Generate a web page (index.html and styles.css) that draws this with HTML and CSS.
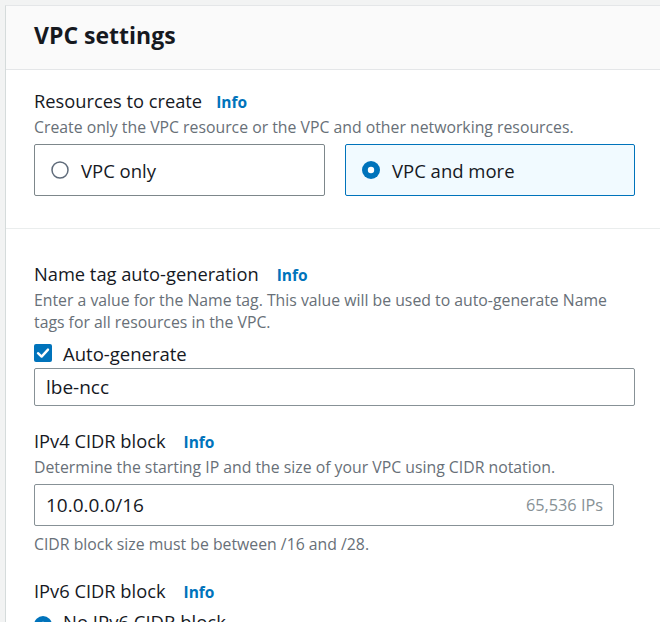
FILE: index.html
```html
<!DOCTYPE html>
<html>
<head>
<meta charset="utf-8">
<link rel="stylesheet" href="styles.css">
</head>
<body>
<div class="card">
  <div class="card-header"><h2>VPC settings</h2></div>
  <div class="section first">
    <div class="label">Resources to create<a class="info first-info">Info</a></div>
    <div class="desc">Create only the VPC resource or the VPC and other networking resources.</div>
    <div class="tiles">
      <div class="tile">
        <svg class="radio" viewBox="0 0 18 18"><circle cx="9" cy="9" r="8" fill="#fff" stroke="#5f6b7a" stroke-width="1.5"/></svg>
        <span>VPC only</span>
      </div>
      <div class="tile selected">
        <svg class="radio" viewBox="0 0 18 18"><circle cx="9" cy="9" r="9" fill="#0073bb"/><circle cx="9" cy="9" r="3.2" fill="#fff"/></svg>
        <span>VPC and more</span>
      </div>
    </div>
  </div>
  <div class="section second">
    <div class="label">Name tag auto-generation<a class="info">Info</a></div>
    <div class="desc two">Enter a value for the Name tag. This value will be used to auto-generate Name tags for all resources in the VPC.</div>
    <div class="check-row">
      <svg class="checkbox" viewBox="0 0 18 18"><rect x="0" y="0" width="18" height="18" rx="2" fill="#0073bb"/><path d="M4 9.2 L7.6 12.6 L14 5.6" fill="none" stroke="#fff" stroke-width="2.4" stroke-linecap="round" stroke-linejoin="round"/></svg>
      <span>Auto-generate</span>
    </div>
    <div class="input name-input">lbe-ncc</div>

    <div class="label field">IPv4 CIDR block<a class="info">Info</a></div>
    <div class="desc">Determine the starting IP and the size of your VPC using CIDR notation.</div>
    <div class="input cidr-input"><span>10.0.0.0/16</span><span class="suffix">65,536 IPs</span></div>
    <div class="desc hint">CIDR block size must be between /16 and /28.</div>

    <div class="label field v6">IPv6 CIDR block<a class="info">Info</a></div>
    <div class="radio-row">
      <svg class="radio" viewBox="0 0 18 18"><circle cx="9" cy="9" r="9" fill="#0073bb"/><circle cx="9" cy="9" r="3.2" fill="#fff"/></svg>
      <span>No IPv6 CIDR block</span>
    </div>
  </div>
</div>
</body>
</html>
```
FILE: styles.css
```css
html, body {
  margin: 0;
  padding: 0;
  background: #f2f3f3;
  font-family: "Open Sans", "Noto Sans", sans-serif;
  color: #16191f;
  overflow: hidden;
  height: 622px;
}
.card {
  margin: 5px 0 0 5px;
  background: #fff;
  border-top: 1px solid #e4e6e8;
  border-left: 1px solid #d5dbdb;
  width: 700px;
  height: 700px;
}
.card-header {
  background: #fafafa;
  border-bottom: 1px solid #e4e6e8;
  display: flex;
  align-items: center;
  padding-left: 28px;
  box-sizing: border-box;
  height: 64px;
  padding-bottom: 5px;
}
.card-header h2 {
  margin: 0;
  font-size: 23px;
  font-weight: 700;
}
.section {
  padding-left: 28px;
  width: 600px;
}
.section.first {
  padding-top: 19px;
  padding-bottom: 32px;
  border-bottom: 1px solid #eaeded;
  width: 626px;
}
.section.second {
  padding-top: 33px;
}
.label {
  font-size: 18.3px;
  line-height: 24px;
  height: 24px;
  white-space: nowrap;
}
.info {
  color: #0073bb;
  font-weight: 700;
  font-size: 15.5px;
  margin-left: 18px;
}
.info.first-info { margin-left: 14px; }
.desc {
  font-size: 15.8px;
  line-height: 22px;
  color: #687078;
  margin-top: 3px;
}
.tiles {
  display: grid;
  grid-template-columns: 291px 290px;
  gap: 20px;
  margin-top: 6px;
  width: 600px;
}
.tile {
  height: 50px;
  border: 1px solid #7d878b;
  border-radius: 2px;
  display: flex;
  align-items: center;
  padding-left: 16px;
  font-size: 18.5px;
}
.tile.selected {
  border-color: #0073bb;
  background: #f1faff;
}
.radio {
  width: 18px;
  height: 18px;
  margin-right: 12px;
  flex: none;
}
.check-row {
  display: flex;
  align-items: center;
  height: 22px;
  margin-top: 9px;
  font-size: 18.5px;
}
.checkbox {
  width: 18px;
  height: 18px;
  margin-right: 11px;
  flex: none;
}
.input {
  border: 1px solid #879196;
  border-radius: 2px;
  display: flex;
  align-items: center;
  justify-content: space-between;
  padding: 0 10px 0 11px;
  font-size: 19px;
  box-sizing: border-box;
}
.name-input {
  width: 601px;
  height: 38px;
  margin-top: 4px;
}
.cidr-input {
  width: 580px;
  height: 42px;
  margin-top: 6px;
}
.suffix {
  font-size: 16.3px;
  color: #879196;
}
.label.field { margin-top: 23px; }
.desc.hint { margin-top: 7px; }
.label.field.v6 { margin-top: 24px; }
.radio-row {
  display: flex;
  align-items: flex-start;
  line-height: 22px;
  margin-top: 8px;
  font-size: 18.5px;
}
.radio-row .radio { margin-right: 11px; margin-top: 5px; }
```
